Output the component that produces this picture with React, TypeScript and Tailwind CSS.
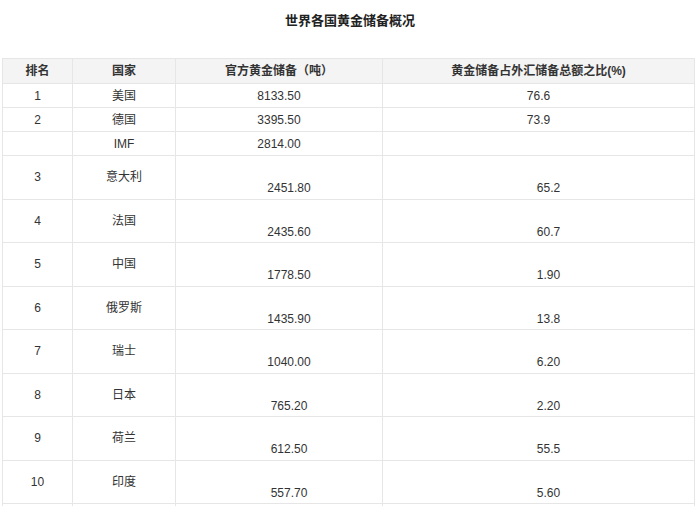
const rows: [string, string, string, string, boolean][] = [
  ["1", "美国", "8133.50", "76.6", false],
  ["2", "德国", "3395.50", "73.9", false],
  ["", "IMF", "2814.00", "", false],
  ["3", "意大利", "2451.80", "65.2", true],
  ["4", "法国", "2435.60", "60.7", true],
  ["5", "中国", "1778.50", "1.90", true],
  ["6", "俄罗斯", "1435.90", "13.8", true],
  ["7", "瑞士", "1040.00", "6.20", true],
  ["8", "日本", "765.20", "2.20", true],
  ["9", "荷兰", "612.50", "55.5", true],
  ["10", "印度", "557.70", "5.60", true],
  ["", "", "", "", true],
];

export default function App() {
  const font = { fontFamily: '"Liberation Sans", Arial, "Noto Sans CJK SC", sans-serif' };
  return (
    <div className="w-[700px] h-[506px] overflow-hidden bg-white text-[#333] text-[12px]" style={font}>
      <div className="h-[44px] pt-[11px] text-center font-bold text-[13px] text-[#222]">世界各国黄金储备概况</div>
      <div className="h-[14px]" />
      <table className="ml-[2px] w-[693px] border-collapse table-fixed">
        <colgroup>
          <col className="w-[70px]" />
          <col className="w-[103px]" />
          <col className="w-[207px]" />
          <col />
        </colgroup>
        <thead>
          <tr className="h-[25px] bg-[#f4f4f4] font-bold">
            {["排名", "国家", "官方黄金储备（吨）", "黄金储备占外汇储备总额之比(%)"].map((h) => (
              <th key={h} className="border border-[#e6e6e6] text-center font-bold">{h}</th>
            ))}
          </tr>
        </thead>
        <tbody>
          {rows.map(([r, c, g, p, tall], i) => (
            <tr key={i} className={tall ? "h-[43.5px]" : "h-[24px]"}>
              <td className="border border-[#e6e6e6] text-center align-middle">{r}</td>
              <td className="border border-[#e6e6e6] text-center align-middle">{c}</td>
              <td className={`border border-[#e6e6e6] text-center ${tall ? "align-top pt-[23px] pl-[20px]" : "align-middle"}`}>{g}</td>
              <td className={`border border-[#e6e6e6] text-center ${tall ? "align-top pt-[23px] pl-[20px]" : "align-middle"}`}>{p}</td>
            </tr>
          ))}
        </tbody>
      </table>
    </div>
  );
}
